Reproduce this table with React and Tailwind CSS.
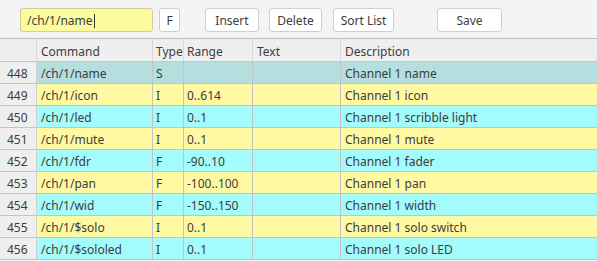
import { useState } from "react";

const rows = [
  { n: 448, cmd: "/ch/1/name", type: "S", range: "", text: "", desc: "Channel 1 name" },
  { n: 449, cmd: "/ch/1/icon", type: "I", range: "0..614", text: "", desc: "Channel 1 icon" },
  { n: 450, cmd: "/ch/1/led", type: "I", range: "0..1", text: "", desc: "Channel 1 scribble light" },
  { n: 451, cmd: "/ch/1/mute", type: "I", range: "0..1", text: "", desc: "Channel 1 mute" },
  { n: 452, cmd: "/ch/1/fdr", type: "F", range: "-90..10", text: "", desc: "Channel 1 fader" },
  { n: 453, cmd: "/ch/1/pan", type: "F", range: "-100..100", text: "", desc: "Channel 1 pan" },
  { n: 454, cmd: "/ch/1/wid", type: "F", range: "-150..150", text: "", desc: "Channel 1 width" },
  { n: 455, cmd: "/ch/1/$solo", type: "I", range: "0..1", text: "", desc: "Channel 1 solo switch" },
  { n: 456, cmd: "/ch/1/$sololed", type: "I", range: "0..1", text: "", desc: "Channel 1 solo LED" },
];

const cols = "grid grid-cols-[37px_116px_31px_69px_88px_1fr]";
const head = "flex items-center pt-[3px] border-r border-[#d8d8d8]";
const cell = "flex items-center pt-[2px] border-b border-[#c4c4c4]";

function Button({ children, className }) {
  return (
    <button
      className={`h-6 pt-px rounded-[3px] border border-[#cfcfcf] bg-white text-[12px] text-[#3c3c3c] ${className}`}
    >
      {children}
    </button>
  );
}

export default function App() {
  const [selected] = useState(448);

  const rowBg = (r, i) => {
    if (r.n === selected) return "bg-[#b5dfde]";
    return i % 2 === 1 ? "bg-[#fff9a3]" : "bg-[#a4fbfb]";
  };

  return (
    <div className="w-[597px] h-[261px] overflow-hidden bg-[#f4f4f4] text-[#3c3c3c] font-['Noto_Sans',sans-serif] text-[12px]">
      {/* toolbar */}
      <div className="h-[39px] flex items-start pt-2 pl-5 border-b border-[#bdbdbd]">
        <div className="w-[133px] h-6 pt-px rounded-[3px] border border-[#cfcf9a] bg-[#fcfc9e] flex items-center pl-[6px]">
          <span>/ch/1/name</span>
          <span className="w-px h-[14px] bg-[#333] ml-px" />
        </div>
        <div className="ml-[6px] w-[21px] h-6 pt-px rounded-[3px] border border-[#cfcfcf] bg-white flex items-center justify-center">
          F
        </div>
        <Button className="ml-[25px] w-[54px]">Insert</Button>
        <Button className="ml-[10px] w-[53px]">Delete</Button>
        <Button className="ml-[11px] w-[61px]">Sort List</Button>
        <Button className="ml-[43px] w-[65px]">Save</Button>
      </div>

      {/* column headers */}
      <div className={`${cols} h-[23px] bg-[#efefef] border-b border-[#c8c8c8]`}>
        <div className={head} />
        <div className={`${head} pl-[4px]`}>Command</div>
        <div className={`${head} pl-[3px]`}>Type</div>
        <div className={`${head} pl-[3px]`}>Range</div>
        <div className={`${head} pl-[4px]`}>Text</div>
        <div className="flex items-center pt-[3px] pl-[4px]">Description</div>
      </div>

      {/* rows */}
      {rows.map((r, i) => (
        <div key={r.n} className={`${cols} h-[22px]`}>
          <div className={`${cell} bg-[#efefef] border-r border-r-[#d0d0d0] pl-[7px]`}>{r.n}</div>
          <div className={`${cell} ${rowBg(r, i)} border-r pl-[4px]`}>{r.cmd}</div>
          <div className={`${cell} ${rowBg(r, i)} border-r pl-[3px]`}>{r.type}</div>
          <div className={`${cell} ${rowBg(r, i)} border-r pl-[3px]`}>{r.range}</div>
          <div className={`${cell} ${rowBg(r, i)} border-r pl-[4px]`}>{r.text}</div>
          <div className={`${cell} ${rowBg(r, i)} pl-[4px]`}>{r.desc}</div>
        </div>
      ))}
    </div>
  );
}
